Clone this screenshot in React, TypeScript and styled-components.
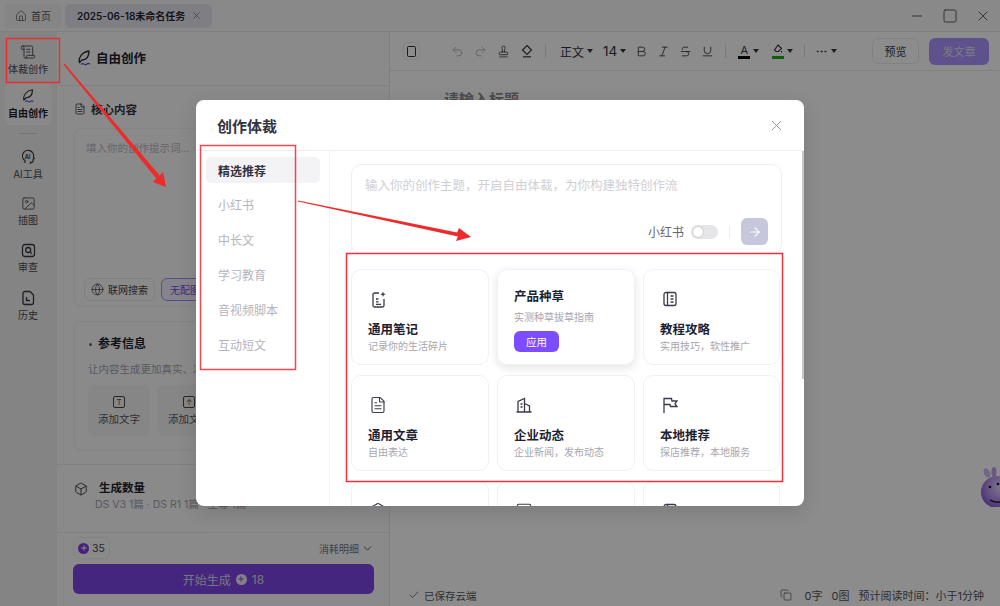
import React from 'react';
import styled, { createGlobalStyle } from 'styled-components';
import {
  ArrowRight,
  Bold,
  Box,
  Check,
  ChevronDown,
  Copy,
  Ellipsis,
  FileText,
  Globe,
  House,
  Image as ImageIcon,
  Italic,
  Minus,
  Plus,
  Redo2,
  ScrollText,
  Square,
  Stamp,
  Strikethrough,
  Underline,
  Undo2,
  X,
} from 'lucide-react';

const GlobalStyle = createGlobalStyle`
  html, body { margin: 0; padding: 0; background: #fff; }
  body { font-family: Inter, "Noto Sans CJK SC", sans-serif; }
  * { box-sizing: border-box; }
`;

const Page = styled.div`
  position: relative;
  width: 1000px;
  height: 606px;
  overflow: hidden;
  display: flex;
  flex-direction: column;
  background: #fff;
  color: #22222e;
`;

/* title bar */
const TitleBar = styled.div`
  height: 32px;
  flex: none;
  display: flex;
  align-items: center;
  padding: 0 5px;
  gap: 3px;
  background: #fafafb;
  border-bottom: 1px solid #eaeaee;
`;

const Tab = styled.div<{ $active?: boolean }>`
  height: 24px;
  display: flex;
  align-items: center;
  gap: ${(p) => (p.$active ? '6px' : '4px')};
  padding: ${(p) => (p.$active ? '0 10px 0 12px' : '0 11px 0 10px')};
  border-radius: 5px;
  font-size: 10px;
  font-weight: ${(p) => (p.$active ? 600 : 400)};
  color: ${(p) => (p.$active ? '#26262e' : '#555560')};
  background: ${(p) => (p.$active ? '#e8e6f2' : '#f2f2f4')};
`;

const WindowControls = styled.div`
  margin-left: auto;
  display: flex;
  align-items: center;
  gap: 17px;
  padding-right: 4px;
  color: #3a3a44;
`;

const Body = styled.div`
  flex: 1;
  min-height: 0;
  display: flex;
`;

/* left rail */
const Rail = styled.div`
  width: 57px;
  flex: none;
  display: flex;
  flex-direction: column;
  align-items: center;
  padding: 4px 1px 0 0;
  background: #f1f1f3;
`;

const RailItem = styled.div<{ $active?: boolean }>`
  width: 47px;
  height: ${(p) => (p.$active ? '42px' : '47px')};
  display: flex;
  flex-direction: column;
  align-items: center;
  justify-content: center;
  gap: 1px;
  border-radius: 6px;
  font-size: 10px;
  color: ${(p) => (p.$active ? '#1f1f28' : '#4b4b55')};
  font-weight: ${(p) => (p.$active ? 600 : 400)};
  background: ${(p) => (p.$active ? '#fafafb' : 'transparent')};
`;

const RailDivider = styled.div`
  width: 20px;
  height: 1px;
  margin: 8px 0 7px;
  background: #d8d8de;
`;

/* creation panel */
const Panel = styled.div`
  width: 333px;
  flex: none;
  display: flex;
  flex-direction: column;
  border-right: 1px solid #e9e9ee;
  background: #fbfbfc;
`;

const PanelHeader = styled.div`
  height: 54px;
  flex: none;
  display: flex;
  align-items: center;
  gap: 3px;
  padding: 0 0 2px 18px;
  font-size: 12.5px;
  font-weight: 600;
  border-bottom: 1px solid #ececf0;
`;

const PanelScroll = styled.div`
  flex: 1;
  min-height: 0;
  overflow: hidden;
  padding: 14px 0 0 17px;
`;

const SectionTitle = styled.div`
  display: flex;
  align-items: center;
  gap: 5px;
  height: 17px;
  font-size: 11.5px;
  font-weight: 600;
  color: #33333d;
`;

const PromptCard = styled.div`
  height: 179px;
  width: 300px;
  margin-top: 11px;
  padding: 11px 11px 5px 9px;
  display: flex;
  flex-direction: column;
  border: 1px solid #f0f0f3;
  border-radius: 7px;
  font-size: 10.5px;
  color: #b9b9c2;
`;

const PromptHint = styled.div`
  padding-left: 2px;
`;

const PromptTools = styled.div`
  margin-top: auto;
  display: flex;
  gap: 6px;
`;

const ToolChip = styled.div<{ $selected?: boolean }>`
  height: 23px;
  padding: 0 ${(p) => (p.$selected ? '8px' : '6px')};
  display: flex;
  align-items: center;
  gap: 4px;
  flex: none;
  white-space: nowrap;
  font-size: 10px;
  border-radius: 6px;
  color: ${(p) => (p.$selected ? '#7a4fdc' : '#44444e')};
  border: 1px solid ${(p) => (p.$selected ? '#a98af0' : '#eaeaee')};
  background: ${(p) => (p.$selected ? '#f3effd' : 'transparent')};
`;

const RefCard = styled.div`
  width: 300px;
  height: 130px;
  margin-top: 14px;
  padding: 13px 13px;
  border: 1px solid #f0f0f3;
  border-radius: 7px;
`;

const RefTitle = styled.div`
  display: flex;
  align-items: center;
  gap: 6px;
  padding-left: 1px;
  font-size: 12px;
  font-weight: 600;
  line-height: 18px;
  &::before {
    content: '';
    width: 3px;
    height: 3px;
    border-radius: 50%;
    background: #66666f;
  }
`;

const RefHint = styled.div`
  margin-top: 10px;
  font-size: 10.5px;
  line-height: 14px;
  white-space: nowrap;
  color: #a4a4ae;
`;

const RefTiles = styled.div`
  display: flex;
  gap: 8px;
  margin-top: 8px;
`;

const RefTile = styled.div`
  width: 62px;
  height: 51px;
  display: flex;
  flex-direction: column;
  align-items: center;
  justify-content: center;
  gap: 3px;
  border-radius: 6px;
  font-size: 10.5px;
  color: #55555f;
  background: #f4f4f6;
`;

const TileIcon = styled.div`
  width: 12px;
  height: 12px;
  border: 1px solid #44444e;
  border-radius: 2px;
  font-size: 8px;
  line-height: 10px;
  text-align: center;
`;

const CountSection = styled.div`
  margin: 13px 0 0 -17px;
  padding: 15px 0 0 17px;
  border-top: 1px solid #ececf0;
`;

const CountTitle = styled.div`
  display: flex;
  align-items: center;
  gap: 11px;
  font-size: 11.5px;
  font-weight: 600;
  line-height: 17px;
`;

const CountDetail = styled.div`
  margin-left: 21px;
  font-size: 10.5px;
  line-height: 15px;
  white-space: nowrap;
  color: #a4a4ae;
`;

const PanelFooter = styled.div`
  height: 74px;
  flex: none;
  padding: 4px 15px 0 16px;
  border-top: 1px solid #ececf0;
`;

const FooterRow = styled.div`
  display: flex;
  align-items: center;
  justify-content: space-between;
`;

const PointsPill = styled.div`
  width: 37px;
  height: 22px;
  display: flex;
  align-items: center;
  justify-content: center;
  gap: 3px;
  font-size: 10.5px;
  color: #44444e;
  border: 1px solid #eeeef1;
  border-radius: 6px;
`;

const Spark = styled.span<{ $light?: boolean }>`
  width: 11px;
  height: 11px;
  display: inline-flex;
  align-items: center;
  justify-content: center;
  border-radius: 50%;
  color: ${(p) => (p.$light ? '#7c52d8' : '#fff')};
  background: ${(p) => (p.$light ? '#f0ecfa' : '#7c3fe0')};
`;

const CostLink = styled.div`
  display: flex;
  align-items: center;
  gap: 2px;
  font-size: 10px;
  color: #77777f;
  svg {
    color: #33333d;
  }
`;

const StartButton = styled.div`
  height: 30px;
  margin-top: 5px;
  display: flex;
  align-items: center;
  justify-content: center;
  gap: 5px;
  border-radius: 6px;
  font-size: 12px;
  color: #dcd6ee;
  background: #7f45e8;
`;

/* editor */
const Editor = styled.div`
  flex: 1;
  min-width: 0;
  display: flex;
  flex-direction: column;
  background: #fff;
`;

const Toolbar = styled.div`
  height: 39px;
  flex: none;
  display: flex;
  align-items: center;
  padding: 0 11px 0 13px;
  border-bottom: 1px solid #ececf0;
`;

const DeviceButton = styled.div`
  width: 17px;
  height: 18px;
  display: flex;
  align-items: center;
  justify-content: center;
  border: 1px solid #f0f0f3;
  border-radius: 4px;
  &::before {
    content: '';
    width: 7px;
    height: 9px;
    border: 1.2px solid #2f2f3a;
    border-radius: 1.5px;
  }
`;

const ToolGroup = styled.div<{ $gap?: number; $left?: number }>`
  display: flex;
  align-items: center;
  gap: ${(p) => p.$gap ?? 10}px;
  margin-left: ${(p) => p.$left ?? 0}px;
  color: #3a3a44;
`;

const ToolSep = styled.div`
  width: 1px;
  height: 14px;
  margin-left: 11px;
  background: #dcdce2;
`;

const ToolText = styled.span<{ $large?: boolean }>`
  display: inline-flex;
  align-items: center;
  gap: 3px;
  font-size: ${(p) => (p.$large ? '13.5px' : '12px')};
  color: #33333d;
`;

const Caret = styled.i`
  width: 0;
  height: 0;
  border-left: 3px solid transparent;
  border-right: 3px solid transparent;
  border-top: 4px solid #33333d;
`;

const ColorLetter = styled.span<{ $color: string }>`
  display: inline-flex;
  align-items: flex-start;
  justify-content: center;
  width: 12px;
  height: 15px;
  font-size: 11px;
  line-height: 12px;
  border-bottom: 3px solid ${(p) => p.$color};
`;

const GhostButton = styled.div`
  width: 47px;
  height: 26px;
  display: flex;
  align-items: center;
  justify-content: center;
  margin-left: auto;
  font-size: 11px;
  color: #3a3a44;
  border: 1px solid #ececf0;
  border-radius: 6px;
`;

const PublishButton = styled.div`
  width: 60px;
  height: 27px;
  display: flex;
  align-items: center;
  justify-content: center;
  margin-left: 10px;
  font-size: 11px;
  color: #e4e0f8;
  border-radius: 6px;
  background: #ad94ff;
`;

const EditorTitle = styled.div`
  padding: 18px 0 0 54px;
  font-size: 15px;
  font-weight: 600;
  line-height: 22px;
  color: #8a8a90;
`;

const StatusBar = styled.div`
  margin-top: auto;
  height: 22px;
  flex: none;
  display: flex;
  align-items: center;
  padding: 0 16px 0 18px;
  font-size: 11px;
  color: #55555f;
`;

const Saved = styled.div`
  display: flex;
  align-items: center;
  gap: 4px;
  font-size: 10.5px;
`;

const Stats = styled.div`
  margin-left: auto;
  display: flex;
  align-items: center;
  gap: 9px;
  svg {
    margin-right: 4px;
  }
`;

const Mascot = styled.svg`
  position: absolute;
  right: 0;
  top: 467px;
`;

/* dialog */
const Overlay = styled.div`
  position: absolute;
  inset: 0;
  display: flex;
  align-items: center;
  justify-content: center;
  background: rgba(0, 0, 0, 0.45);
`;

const Dialog = styled.div`
  width: 608px;
  height: 406px;
  display: flex;
  flex-direction: column;
  overflow: hidden;
  border-radius: 8px;
  background: #fff;
  box-shadow: 0 6px 20px rgba(0, 0, 0, 0.12);
`;

const DialogHeader = styled.div`
  height: 51px;
  flex: none;
  display: flex;
  align-items: center;
  justify-content: space-between;
  padding: 0 19px 0 21px;
  border-bottom: 1px solid #eeeef1;
  font-size: 15px;
  font-weight: 600;
  color: #33333f;
`;

const DialogBody = styled.div`
  flex: 1;
  min-height: 0;
  display: flex;
  position: relative;
`;

const CategoryList = styled.div`
  width: 134px;
  flex: none;
  padding: 6px 9px 0 10px;
  display: flex;
  flex-direction: column;
  border-right: 1px solid #f3f3f5;
`;

const Category = styled.div<{ $active?: boolean }>`
  height: ${(p) => (p.$active ? '26px' : '35px')};
  margin-bottom: ${(p) => (p.$active ? '4px' : '0')};
  display: flex;
  align-items: center;
  padding-left: 12px;
  font-size: 12px;
  border-radius: 5px;
  font-weight: ${(p) => (p.$active ? 600 : 400)};
  color: ${(p) => (p.$active ? '#33333f' : '#b4b4bc')};
  background: ${(p) => (p.$active ? '#f3f3f6' : 'transparent')};
`;

const DialogMain = styled.div`
  flex: 1;
  min-width: 0;
  padding: 13px 22px 0 21px;
  overflow: hidden;
`;

const TopicBox = styled.div`
  height: 90px;
  padding: 13px 13px 8px 13px;
  display: flex;
  flex-direction: column;
  justify-content: space-between;
  border: 1px solid #eeeef1;
  border-radius: 10px;
`;

const TopicHint = styled.div`
  font-size: 12.5px;
  line-height: 16px;
  color: #cfcfd6;
`;

const TopicActions = styled.div`
  display: flex;
  align-items: center;
  justify-content: flex-end;
  font-size: 12px;
  color: #66666f;
`;

const Toggle = styled.div`
  width: 27px;
  height: 14px;
  margin-left: 7px;
  padding: 2px;
  border-radius: 7px;
  background: #e6e6e9;
  &::before {
    content: '';
    display: block;
    width: 10px;
    height: 10px;
    border-radius: 50%;
    background: #fff;
    box-shadow: 0 0 2px rgba(0, 0, 0, 0.3);
  }
`;

const ActionSep = styled.div`
  width: 1px;
  height: 12px;
  margin: 0 11px;
  background: #ececf0;
`;

const SendButton = styled.div`
  width: 27px;
  height: 27px;
  display: flex;
  align-items: center;
  justify-content: center;
  color: #fff;
  border-radius: 6px;
  background: #c6c7dc;
`;

const CardGrid = styled.div`
  display: grid;
  grid-template-columns: 138px 138px 137px;
  grid-auto-rows: 96px;
  column-gap: 8px;
  row-gap: 10px;
  margin-top: 15px;
`;

const Card = styled.div<{ $hover?: boolean }>`
  display: flex;
  flex-direction: column;
  padding: ${(p) => (p.$hover ? '18px 16px 0' : '20px 16px 0')};
  border-radius: 10px;
  border: 1px solid #f1f1f4;
  box-shadow: ${(p) => (p.$hover ? '0 3px 10px rgba(30, 30, 60, 0.12)' : 'none')};
  color: #3a3a4a;
`;

const CardIcon = styled.div`
  height: 20px;
  margin: 0 0 11px 1px;
`;

const CardTitle = styled.div`
  font-size: 12.5px;
  font-weight: 600;
  line-height: 18px;
  color: #1f1f33;
`;

const CardDesc = styled.div<{ $hover?: boolean }>`
  margin-top: ${(p) => (p.$hover ? '4px' : '0')};
  font-size: 10px;
  line-height: 14px;
  white-space: nowrap;
  color: #a6a6b0;
`;

const ApplyButton = styled.div`
  width: 45px;
  height: 21px;
  margin-top: 7px;
  display: flex;
  align-items: center;
  justify-content: center;
  font-size: 10.5px;
  color: #fff;
  border-radius: 6px;
  background: #7c4dff;
`;

const ScrollThumb = styled.div`
  position: absolute;
  right: 0;
  top: 0;
  width: 2px;
  height: 228px;
  background: #c9c9c9;
`;

/* red marks drawn over the screenshot */
const Marks = styled.svg`
  position: absolute;
  inset: 0;
  pointer-events: none;
`;

const iconProps = { strokeWidth: 1.5 };

const QuillIcon = ({ size = 18 }: { size?: number }) => (
  <svg width={size} height={size} viewBox="0 0 18 18" fill="none">
    <path
      d="M4 13c0-5 3-10 10-11 0 5-2 9-7 9l-3 3"
      stroke="#2a2a33"
      strokeWidth="1.3"
      strokeLinejoin="round"
    />
    <path d="M6 15.5c1-1.2 2-1.2 3-.4s2 .8 3-.1 2-.6 3 .2" stroke="#6a46d8" strokeWidth="1.2" />
  </svg>
);

const AiHeadIcon = () => (
  <svg width="16" height="16" viewBox="0 0 16 16" fill="none" stroke="#3a3a44" strokeWidth="1.2">
    <path d="M5 14v-2.4A5.6 5.6 0 1 1 13.5 8l.9 1.6-1.3.6V12a1.4 1.4 0 0 1-1.4 1.4h-1.2V15" />
    <text x="4.7" y="9.5" fontSize="5.5" fontWeight="700" fill="#3a3a44" stroke="none">
      AI
    </text>
  </svg>
);

const ReviewIcon = () => (
  <svg width="15" height="15" viewBox="0 0 15 15" fill="none" stroke="#3a3a44" strokeWidth="1.3">
    <rect x="1.5" y="1.5" width="12" height="12" rx="2.5" />
    <circle cx="7.2" cy="7" r="2.5" />
    <path d="M9 9l1.7 1.7" />
  </svg>
);

const HistoryIcon = () => (
  <svg width="16" height="16" viewBox="0 0 16 16" fill="none" stroke="#3a3a44" strokeWidth="1.3">
    <path d="M3 3.5a2 2 0 0 1 2-2h5L13.5 5v7.5a2 2 0 0 1-2 2H5a2 2 0 0 1-2-2z" />
    <path d="M6.5 7v3.5H10" />
  </svg>
);

const EraserIcon = () => (
  <svg width="14" height="14" viewBox="0 0 14 14" fill="none" stroke="#3a3a44" strokeWidth="1.2">
    <path d="M7 1.5L11.5 6 7 10.500 2.500 6z" />
    <path d="M3 12.800h8" />
  </svg>
);

const HighlightIcon = () => (
  <svg width="10" height="10" viewBox="0 0 10 10" fill="none" stroke="#33333d" strokeWidth="1.1">
    <path d="M5 1L8.500 4.500 5.500 7.500H3L1.500 6z" />
    <path d="M8.500 7v1.500" />
  </svg>
);

const NoteSparkIcon = () => (
  <svg width="18" height="20" viewBox="0 0 18 20" fill="none" stroke="currentColor" strokeWidth="1.3">
    <path d="M10 3H5.500A1.500 1.500 0 0 0 4 4.500v11A1.500 1.500 0 0 0 5.500 17h8a1.500 1.500 0 0 0 1.500-1.500V9" />
    <path d="M7 9h2.500M7 11.800h2.500M7 14.300h5" />
    <path d="M14 1.500l.8 2 2 .8-2 .8-.8 2-.8-2-2-.8 2-.8z" fill="currentColor" stroke="none" />
  </svg>
);

const GuideIcon = () => (
  <svg width="18" height="18" viewBox="0 0 18 18" fill="none" stroke="currentColor" strokeWidth="1.3">
    <rect x="3" y="2.500" width="12" height="13" rx="2" />
    <path d="M6.500 2.500v13M9.500 6h3M9.500 9h3M9.500 12h3" />
  </svg>
);

const CompanyIcon = () => (
  <svg width="18" height="18" viewBox="0 0 18 18" fill="none" stroke="currentColor" strokeWidth="1.3">
    <path d="M3 16V5.500L9.500 2.500V16" />
    <path d="M9.500 7.500l5 2.500v6" />
    <path d="M1.500 16h15M5.500 8h2M5.500 11h2" />
  </svg>
);

const LocalFlagIcon = () => (
  <svg width="18" height="18" viewBox="0 0 18 18" fill="none" stroke="currentColor" strokeWidth="1.3">
    <path d="M3 17V2.500h7.500L11 5h5l-2 2.700 2 2.800H9.500L9 8.500H3" />
  </svg>
);

const Annotations = () => (
  <Marks width="1000" height="606" viewBox="0 0 1000 606">
    <rect x="6.5" y="38.5" width="53" height="44" fill="none" stroke="#f02a2a" strokeWidth="1.4" />
    <rect x="200.5" y="145.5" width="95" height="224" fill="none" stroke="#f0464f" strokeWidth="1.5" />
    <rect x="346.5" y="253.5" width="436" height="228" fill="none" stroke="#f0303c" strokeWidth="1.5" />
    <polygon
      points="63.4,64.4 156.3,178.4 153,182 166,187 163,172 159.700,175.600 64.600,63.600"
      fill="#ee2b2b"
    />
    <polygon
      points="298,200.600 457.100,232.500 459,228 471,237 456,241 457.900,236.500 298,201.400"
      fill="#ee2b2b"
    />
  </Marks>
);

const cards = [
  { title: '通用笔记', desc: '记录你的生活碎片', icon: <NoteSparkIcon /> },
  { title: '产品种草', desc: '实测种草拔草指南', hover: true },
  { title: '教程攻略', desc: '实用技巧，软性推广', icon: <GuideIcon /> },
  { title: '通用文章', desc: '自由表达', icon: <FileText size={18} {...iconProps} /> },
  { title: '企业动态', desc: '企业新闻，发布动态', icon: <CompanyIcon /> },
  { title: '本地推荐', desc: '探店推荐，本地服务', icon: <LocalFlagIcon /> },
  { title: '', desc: '', icon: <Box size={18} {...iconProps} /> },
  { title: '', desc: '', icon: <Square size={18} {...iconProps} /> },
  { title: '', desc: '', icon: <GuideIcon /> },
];

const categories = ['小红书', '中长文', '学习教育', '音视频脚本', '互动短文'];

export default function App() {
  return (
    <>
      <GlobalStyle />
      <Page>
        <TitleBar>
          <Tab>
            <House size={12} strokeWidth={1.5} />
            首页
          </Tab>
          <Tab $active>
            2025-06-18未命名任务
            <X size={11} strokeWidth={1.5} color="#66666f" />
          </Tab>
          <WindowControls>
            <Minus size={16} strokeWidth={1.2} />
            <Square size={16} strokeWidth={1.2} />
            <X size={16} strokeWidth={1.2} />
          </WindowControls>
        </TitleBar>
        <Body>
          <Rail>
            <RailItem>
              <ScrollText size={16} strokeWidth={1.4} />
              体裁创作
            </RailItem>
            <RailItem $active>
              <QuillIcon size={16} />
              自由创作
            </RailItem>
            <RailDivider />
            <RailItem>
              <AiHeadIcon />
              AI工具
            </RailItem>
            <RailItem>
              <ImageIcon size={15} strokeWidth={1.4} />
              插图
            </RailItem>
            <RailItem>
              <ReviewIcon />
              审查
            </RailItem>
            <RailItem>
              <HistoryIcon />
              历史
            </RailItem>
          </Rail>
          <Panel>
            <PanelHeader>
              <QuillIcon />
              自由创作
            </PanelHeader>
            <PanelScroll>
              <SectionTitle>
                <FileText size={12} strokeWidth={1.6} />
                核心内容
              </SectionTitle>
              <PromptCard>
                <PromptHint>填入你的创作提示词...</PromptHint>
                <PromptTools>
                  <ToolChip>
                    <Globe size={13} strokeWidth={1.4} />
                    联网搜索
                  </ToolChip>
                  <ToolChip $selected>无配图</ToolChip>
                </PromptTools>
              </PromptCard>
              <RefCard>
                <RefTitle>参考信息</RefTitle>
                <RefHint>让内容生成更加真实、准确</RefHint>
                <RefTiles>
                  <RefTile>
                    <TileIcon>T</TileIcon>
                    添加文字
                  </RefTile>
                  <RefTile>
                    <TileIcon>↑</TileIcon>
                    添加文件
                  </RefTile>
                </RefTiles>
              </RefCard>
              <CountSection>
                <CountTitle>
                  <Box size={14} strokeWidth={1.4} />
                  生成数量
                </CountTitle>
                <CountDetail>DS V3 1篇 · DS R1 1篇 · 至尊 1篇</CountDetail>
              </CountSection>
            </PanelScroll>
            <PanelFooter>
              <FooterRow>
                <PointsPill>
                  <Spark>
                    <Plus size={8} strokeWidth={3} />
                  </Spark>
                  35
                </PointsPill>
                <CostLink>
                  消耗明细
                  <ChevronDown size={13} strokeWidth={1.5} />
                </CostLink>
              </FooterRow>
              <StartButton>
                开始生成
                <Spark $light>
                  <Plus size={8} strokeWidth={3} />
                </Spark>
                18
              </StartButton>
            </PanelFooter>
          </Panel>
          <Editor>
            <Toolbar>
              <DeviceButton />
              <ToolGroup $left={31} $gap={10}>
                <Undo2 size={13} strokeWidth={1.3} color="#a0a0a8" />
                <Redo2 size={13} strokeWidth={1.3} color="#a0a0a8" />
                <Stamp size={13} strokeWidth={1.5} />
                <EraserIcon />
              </ToolGroup>
              <ToolSep />
              <ToolGroup $left={14} $gap={10}>
                <ToolText>
                  正文 <Caret />
                </ToolText>
                <ToolText $large>
                  14
                  <Caret />
                </ToolText>
              </ToolGroup>
              <ToolGroup $left={9} $gap={9}>
                <Bold size={13} strokeWidth={1.6} />
                <Italic size={13} strokeWidth={1.6} />
                <Strikethrough size={13} strokeWidth={1.6} />
                <Underline size={13} strokeWidth={1.6} />
              </ToolGroup>
              <ToolSep />
              <ToolGroup $left={12} $gap={13}>
                <ToolText>
                  <ColorLetter $color="#000">A</ColorLetter>
                  <Caret />
                </ToolText>
                <ToolText>
                  <ColorLetter $color="#12b012">
                    <HighlightIcon />
                  </ColorLetter>
                  <Caret />
                </ToolText>
              </ToolGroup>
              <ToolSep />
              <ToolGroup $left={10}>
                <ToolText>
                  <Ellipsis size={13} strokeWidth={1.6} />
                  <Caret />
                </ToolText>
              </ToolGroup>
              <GhostButton>预览</GhostButton>
              <PublishButton>发文章</PublishButton>
            </Toolbar>
            <EditorTitle>请输入标题</EditorTitle>
            <StatusBar>
              <Saved>
                <Check size={12} strokeWidth={1.5} />
                已保存云端
              </Saved>
              <Stats>
                <Copy size={12} strokeWidth={1.4} />
                <span>0字</span>
                <span>0图</span>
                <span>预计阅读时间：小于1分钟</span>
              </Stats>
            </StatusBar>
          </Editor>
        </Body>
        <Mascot width="22" height="40" viewBox="0 0 22 40">
          <defs>
            <radialGradient id="mascotBody" cx="0.6" cy="0.35" r="0.75">
              <stop offset="0" stopColor="#e6d8fa" />
              <stop offset="0.55" stopColor="#b690ee" />
              <stop offset="1" stopColor="#7c4bd0" />
            </radialGradient>
          </defs>
          <ellipse cx="9" cy="6" rx="3" ry="5" fill="#d4b8f2" transform="rotate(-25 9 6)" />
          <ellipse cx="16" cy="5" rx="2.5" ry="5" fill="#c19ff0" />
          <circle cx="19" cy="25" r="16" fill="url(#mascotBody)" />
          <circle cx="12" cy="20" r="1.3" fill="#111" />
          <circle cx="20" cy="17" r="1.3" fill="#111" />
          <path d="M12 33c3 2 6 2.5 10 2" stroke="#111" strokeWidth="1.3" fill="none" />
        </Mascot>
        <Overlay>
          <Dialog>
            <DialogHeader>
              创作体裁
              <X size={17} strokeWidth={1.2} color="#85858f" />
            </DialogHeader>
            <DialogBody>
              <CategoryList>
                <Category $active>精选推荐</Category>
                {categories.map((c) => (
                  <Category key={c}>{c}</Category>
                ))}
              </CategoryList>
              <DialogMain>
                <TopicBox>
                  <TopicHint>输入你的创作主题，开启自由体裁，为你构建独特创作流</TopicHint>
                  <TopicActions>
                    小红书
                    <Toggle />
                    <ActionSep />
                    <SendButton>
                      <ArrowRight size={14} strokeWidth={2} />
                    </SendButton>
                  </TopicActions>
                </TopicBox>
                <CardGrid>
                  {cards.map((card, i) => (
                    <Card key={i} $hover={card.hover}>
                      {card.icon && <CardIcon>{card.icon}</CardIcon>}
                      <CardTitle>{card.title}</CardTitle>
                      <CardDesc $hover={card.hover}>{card.desc}</CardDesc>
                      {card.hover && <ApplyButton>应用</ApplyButton>}
                    </Card>
                  ))}
                </CardGrid>
              </DialogMain>
              <ScrollThumb />
            </DialogBody>
          </Dialog>
        </Overlay>
        <Annotations />
      </Page>
    </>
  );
}
